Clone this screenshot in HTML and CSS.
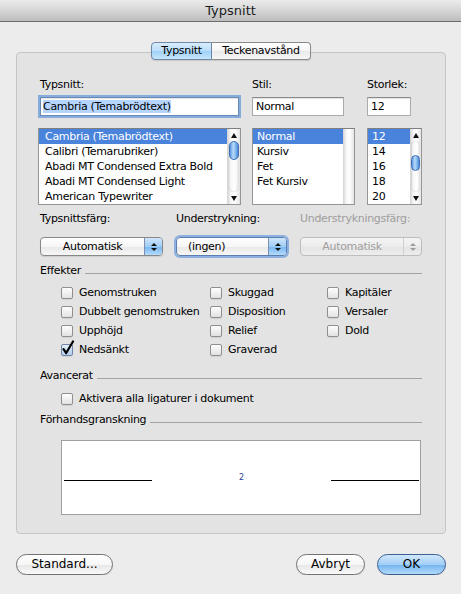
FILE: index.html
```html
<!DOCTYPE html>
<html lang="sv">
<head>
  <meta charset="UTF-8" />
  <title>Typsnitt</title>
  <link rel="stylesheet" href="styles.css">
</head>
<body>
  <div class="titlebar">Typsnitt</div>

  <div class="window">
    <div class="tabs">
      <span class="tab tab-on">Typsnitt</span>
      <span class="tab">Teckenavstånd</span>
    </div>

    <div class="panel">
      <!-- font / style / size pickers -->
      <div class="pickers">
        <div class="picker picker-font">
          <div class="label">Typsnitt:</div>
          <div class="field field-focus"><span class="sel">Cambria (Temabrödtext)</span></div>
          <div class="list">
            <ul class="rows">
              <li class="on">Cambria (Temabrödtext)</li>
              <li>Calibri (Temarubriker)</li>
              <li>Abadi MT Condensed Extra Bold</li>
              <li>Abadi MT Condensed Light</li>
              <li>American Typewriter</li>
            </ul>
            <div class="scroll scroll-wide">
              <span class="arr arr-up"></span>
              <span class="track"><span class="thumb thumb-font"></span></span>
              <span class="arr arr-down"></span>
            </div>
          </div>
        </div>

        <div class="picker picker-style">
          <div class="label">Stil:</div>
          <div class="field field-style">Normal</div>
          <div class="list">
            <ul class="rows rows-tight">
              <li class="on">Normal</li>
              <li>Kursiv</li>
              <li>Fet</li>
              <li>Fet Kursiv</li>
            </ul>
            <div class="scroll scroll-empty"></div>
          </div>
        </div>

        <div class="picker picker-size">
          <div class="label">Storlek:</div>
          <div class="field field-size">12</div>
          <div class="list">
            <ul class="rows rows-tight">
              <li class="on">12</li>
              <li>14</li>
              <li>16</li>
              <li>18</li>
              <li>20</li>
            </ul>
            <div class="scroll">
              <span class="arr arr-up"></span>
              <span class="track"><span class="thumb thumb-size"></span></span>
              <span class="arr arr-down"></span>
            </div>
          </div>
        </div>
      </div>

      <!-- colour and underline popups -->
      <div class="popups">
        <div class="pop-col pop-a">
          <div class="label">Typsnittsfärg:</div>
          <div class="popup"><span class="val">Automatisk</span><span class="arrows"></span></div>
        </div>
        <div class="pop-col pop-b">
          <div class="label">Understrykning:</div>
          <div class="popup popup-focus"><span class="val val-left">(ingen)</span><span class="arrows"></span></div>
        </div>
        <div class="pop-col pop-c">
          <div class="label label-off">Understrykningsfärg:</div>
          <div class="popup popup-off"><span class="val">Automatisk</span><span class="arrows"></span></div>
        </div>
      </div>

      <div class="group group-effects">Effekter<span class="rule"></span></div>
      <div class="effects">
        <div class="check"><span class="box"></span>Genomstruken</div>
        <div class="check"><span class="box"></span>Skuggad</div>
        <div class="check"><span class="box"></span>Kapitäler</div>
        <div class="check"><span class="box"></span>Dubbelt genomstruken</div>
        <div class="check"><span class="box"></span>Disposition</div>
        <div class="check"><span class="box"></span>Versaler</div>
        <div class="check"><span class="box"></span>Upphöjd</div>
        <div class="check"><span class="box"></span>Relief</div>
        <div class="check"><span class="box"></span>Dold</div>
        <div class="check">
          <span class="box box-on">
            <svg class="tick" width="14" height="16" viewBox="0 0 14 16"><path d="M2.5 9.2 L5.2 13 L12 1.5" fill="none" stroke="#000" stroke-width="2.2" stroke-linecap="round" stroke-linejoin="round"/></svg>
          </span>Nedsänkt
        </div>
        <div class="check"><span class="box"></span>Graverad</div>
      </div>

      <div class="group group-adv">Avancerat<span class="rule"></span></div>
      <div class="effects effects-one">
        <div class="check"><span class="box"></span>Aktivera alla ligaturer i dokument</div>
      </div>

      <div class="group group-prev">Förhandsgranskning<span class="rule"></span></div>
      <div class="preview">
        <span class="pline"></span>
        <span class="num">2</span>
        <span class="pline"></span>
      </div>
    </div>

    <div class="footer">
      <span class="btn btn-std">Standard...</span>
      <span class="grow"></span>
      <span class="btn btn-cancel">Avbryt</span>
      <span class="btn btn-ok">OK</span>
    </div>
  </div>
</body>
</html>
```

FILE: styles.css
```css
* {
  box-sizing: border-box;
}
body {
  margin: 0;
  background: #ececec;
  font-family: "DejaVu Sans", sans-serif;
  font-size: 11px;
  letter-spacing: -0.3px;
  color: #000;
}

.titlebar {
  height: 22px;
  border-bottom: 1px solid #6c6c6c;
  background: linear-gradient(#ebebeb, #d6d6d6 50%, #bcbcbc);
  text-align: center;
  font-size: 13px;
  line-height: 21px;
  letter-spacing: 0;
  color: #1c1c1c;
}

.window {
  padding: 20px 15px 0 16px;
}

/* tabs */
.tabs {
  display: flex;
  justify-content: center;
  position: relative;
  z-index: 1;
  margin-bottom: -8px;
}
.tab {
  height: 18px;
  line-height: 16px;
  border: 1px solid #8a8a8a;
  background: linear-gradient(#ffffff, #f4f4f4 50%, #e9e9e9 51%, #f6f6f6);
  text-align: center;
  box-shadow: 0 1px 1px rgba(0, 0, 0, 0.12);
}
.tab:first-child {
  width: 61px;
  border-radius: 4px 0 0 4px;
}
.tab:last-child {
  width: 99px;
  border-left: none;
  border-radius: 0 4px 4px 0;
}
.tab-on {
  background: linear-gradient(#d9edfd, #b9ddf9 50%, #9fd0f6 51%, #c6e6fc);
  border-color: #6f87a8;
}

.panel {
  border: 1px solid #c5c5c5;
  border-radius: 4px;
  background: #e3e3e3;
  padding: 25px 23px 18px 21px;
}

.label {
  height: 14px;
  line-height: 14px;
  white-space: nowrap;
}
.label-off {
  color: #9d9d9d;
}

/* pickers */
.pickers {
  display: flex;
}
.picker-font {
  width: 203px;
}
.picker-font .label {
  padding-left: 2px;
}
.picker-style {
  width: 103px;
  margin-left: 11px;
}
.picker-size {
  width: 55px;
  margin-left: 12px;
}

.field {
  height: 19px;
  margin-top: 5px;
  border: 1px solid #ababab;
  border-top-color: #8a8a8a;
  background: #fff;
  padding: 0 3px;
  line-height: 17px;
  white-space: nowrap;
  overflow: hidden;
  box-shadow: inset 0 1px 1px rgba(0, 0, 0, 0.12);
}
.field-focus {
  margin-left: 2px;
  margin-right: 2px;
  padding-left: 2px;
  box-shadow: 0 0 0 2px #86acdc, inset 0 1px 1px rgba(0, 0, 0, 0.12);
  border-color: #6a8bb8;
}
.sel {
  background: #b5d5ff;
}
.field-style {
  width: 92px;
}
.field-size {
  width: 44px;
}

.list {
  display: flex;
  height: 77px;
  margin-top: 12px;
  border: 1px solid #959595;
  border-top-color: #7f7f7f;
  background: #fff;
}
.rows {
  flex: 1;
  list-style: none;
  margin: 0;
  padding: 0;
  overflow: hidden;
}
.rows li {
  height: 15px;
  line-height: 15px;
  padding-left: 6px;
  white-space: nowrap;
}
.rows-tight li {
  padding-left: 4px;
}
.rows li.on {
  background: #4a83dc;
  color: #fff;
}

/* scrollbars */
.scroll {
  width: 11px;
  display: flex;
  flex-direction: column;
  background: linear-gradient(to right, #d2d2d2, #f7f7f7 30%, #ffffff 60%, #e4e4e4);
}
.scroll-wide {
  width: 13px;
}
.arr {
  height: 12px;
  display: flex;
  justify-content: center;
  align-items: center;
}
.arr-up::after {
  content: "";
  border-left: 3px solid transparent;
  border-right: 3px solid transparent;
  border-bottom: 5px solid #111;
}
.arr-down::after {
  content: "";
  border-left: 3px solid transparent;
  border-right: 3px solid transparent;
  border-top: 5px solid #111;
}
.track {
  flex: 1;
  display: flex;
  flex-direction: column;
  align-items: center;
  border-radius: 6px;
  box-shadow: inset 0 0 2px rgba(0, 0, 0, 0.18);
  margin: 0 1px;
}
.thumb {
  width: 9px;
  border: 1px solid #3d6fb6;
  border-radius: 5px;
  background: linear-gradient(to right, #5a94e0, #b8dafa 40%, #8bc0f2 65%, #4e88d8);
}
.thumb-font {
  width: 10px;
  height: 19px;
  margin-top: 0;
}
.thumb-size {
  height: 16px;
  margin-top: 14px;
}

/* popups */
.popups {
  display: flex;
  margin-top: 7px;
  padding-left: 2px;
}
.pop-a {
  width: 123px;
}
.pop-b {
  width: 111px;
  margin-left: 13px;
}
.pop-c {
  width: 122px;
  margin-left: 13px;
}
.popup {
  display: flex;
  height: 19px;
  margin-top: 11px;
  border: 1px solid #888;
  border-radius: 4px;
  overflow: hidden;
  background: linear-gradient(#ffffff, #f5f5f5 50%, #e8e8e8 51%, #f7f7f7);
  box-shadow: 0 1px 1px rgba(0, 0, 0, 0.1);
}
.popup .val {
  flex: 1;
  line-height: 17px;
  text-align: center;
  white-space: nowrap;
}
.popup .val-left {
  text-align: left;
  padding-left: 11px;
}
.arrows {
  width: 18px;
  border-left: 1px solid #7d8fac;
  background: linear-gradient(#cfe6fb, #9fcdf5 50%, #76b6f0 51%, #b3dbfb);
  display: flex;
  flex-direction: column;
  align-items: center;
  justify-content: center;
  gap: 2px;
}
.arrows::before {
  content: "";
  border-left: 3px solid transparent;
  border-right: 3px solid transparent;
  border-bottom: 3px solid #111;
}
.arrows::after {
  content: "";
  border-left: 3px solid transparent;
  border-right: 3px solid transparent;
  border-top: 3px solid #111;
}
.popup-focus {
  border-color: #5b7eae;
  box-shadow: 0 0 0 2px #8cb1e1;
}
.popup-off {
  color: #9f9f9f;
  border-color: #bdbdbd;
  background: linear-gradient(#f4f4f4, #ececec 50%, #e4e4e4 51%, #ededed);
  box-shadow: none;
}
.popup-off .arrows {
  border-left-color: #cfcfcf;
  background: transparent;
}
.popup-off .arrows::before {
  border-bottom-color: #9d9d9d;
}
.popup-off .arrows::after {
  border-top-color: #9d9d9d;
}

/* section headings with a rule */
.group {
  display: flex;
  align-items: flex-start;
  height: 14px;
  line-height: 14px;
  padding-left: 2px;
  white-space: nowrap;
}
.rule {
  flex: 1;
  height: 10px;
  margin-left: 4px;
  border-bottom: 1px solid #a3a3a3;
}
.group-effects {
  margin-top: 8px;
}
.group-adv {
  margin-top: 10px;
}
.group-prev {
  margin-top: 5px;
}

/* checkboxes */
.effects {
  display: grid;
  grid-template-columns: 149px 117px 1fr;
  margin: 5px 0 0 23px;
}
.effects-one {
  margin-top: 6px;
  grid-template-columns: 1fr;
}
.check {
  display: flex;
  align-items: center;
  gap: 6px;
  height: 19px;
  line-height: 19px;
  white-space: nowrap;
}
.box {
  position: relative;
  width: 12px;
  height: 12px;
  flex: none;
  border: 1px solid #8f8f8f;
  border-radius: 2px;
  background: linear-gradient(#fdfdfd, #f0f0f0 50%, #e2e2e2);
  box-shadow: 0 1px 1px rgba(0, 0, 0, 0.08);
}
.box-on {
  border-color: #6f86a8;
  background: linear-gradient(#e6f0fb, #c9ddf3 50%, #b4cfee);
}
.tick {
  position: absolute;
  left: -1px;
  top: -5px;
}

/* preview */
.preview {
  display: flex;
  justify-content: space-between;
  align-items: flex-start;
  width: 360px;
  height: 75px;
  margin: 13px 0 0 23px;
  padding: 30px 1px 0 2px;
  border: 1px solid #a0a0a0;
  background: #fff;
}
.pline {
  width: 88px;
  height: 10px;
  border-bottom: 1px solid #000;
}
.num {
  font-size: 8px;
  line-height: 14px;
  letter-spacing: 0;
  color: #2b418f;
}

/* bottom buttons */
.footer {
  display: flex;
  margin-top: 20px;
}
.grow {
  flex: 1;
}
.btn {
  height: 21px;
  border: 1px solid #727272;
  border-radius: 11px;
  background: linear-gradient(#ffffff, #f6f6f6 50%, #e6e6e6 51%, #f9f9f9);
  font-size: 12px;
  line-height: 19px;
  letter-spacing: 0;
  text-align: center;
  box-shadow: 0 1px 1px rgba(0, 0, 0, 0.12);
}
.btn-std {
  width: 97px;
}
.btn-cancel {
  width: 69px;
}
.btn-ok {
  width: 69px;
  margin-left: 12px;
  border-color: #3b5f93;
  background: linear-gradient(#d0e7fc, #a2cff6 50%, #73b3ef 51%, #b2dcfd);
}
```
